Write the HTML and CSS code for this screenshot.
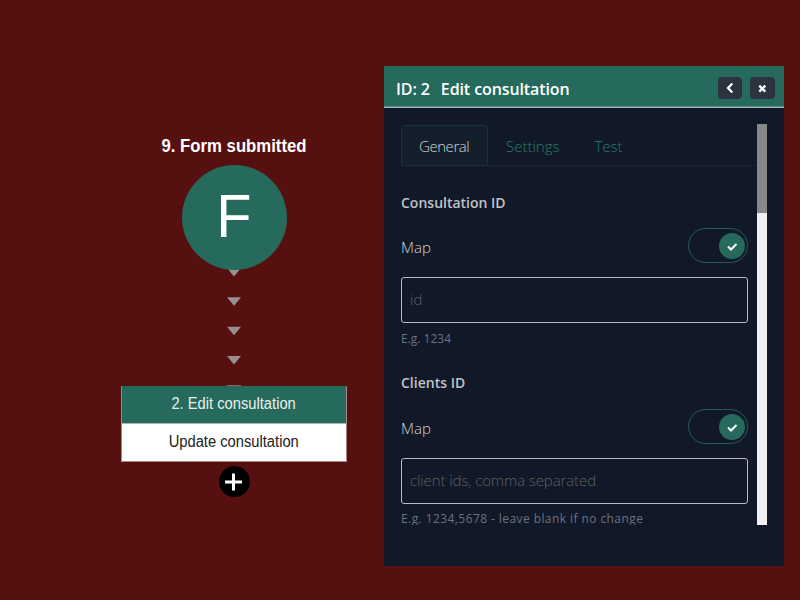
FILE: index.html
```html
<!DOCTYPE html>
<html lang="en">
<head>
<meta charset="utf-8">
<title>Edit consultation</title>
<link rel="stylesheet" href="styles.css">
</head>
<body>
<main class="canvas">
  <section class="flow">
    <h2 class="trigger-title"><span>9. Form submitted</span></h2>
    <svg class="connector" width="16" height="120" viewBox="0 0 16 120" fill="#989090">
      <path d="M1 2h14L8 10.500zM1 31.300h14L8 39.800zM1 60.700h14L8 69.200zM1 90h14L8 98.500z"/>
      <path d="M1 119.300h14v2H1z"/>
    </svg>
    <div class="trigger"><span>F</span></div>
    <div class="step">
      <div class="step-head"><span>2. Edit consultation</span></div>
      <div class="step-body"><span>Update consultation</span></div>
    </div>
    <button class="add" aria-label="Add step"><svg width="31" height="31" viewBox="0 0 31 31"><path d="M14.500 7.500v17M6 16h17" stroke="#fff" stroke-width="3"/></svg></button>
  </section>

  <aside class="panel">
    <header class="panel-head">
      <h1><span class="panel-id">ID: 2</span><span class="panel-name">Edit consultation</span></h1>
      <button class="head-btn" aria-label="Back"><svg width="24" height="22" viewBox="0 0 24 22"><path d="M14.300 6.500l-4.300 4.500 4.300 4.500" fill="none" stroke="#fff" stroke-width="2.200"/></svg></button>
      <button class="head-btn close" aria-label="Close"><svg width="25" height="22" viewBox="0 0 25 22"><path d="M9.300 8.600l6 6M15.300 8.600l-6 6" fill="none" stroke="#fff" stroke-width="2.300"/></svg></button>
    </header>
    <div class="panel-body">
      <div class="content">
        <nav class="tabs">
          <a class="tab active"><span>General</span></a>
          <a class="tab settings"><span>Settings</span></a>
          <a class="tab test"><span>Test</span></a>
        </nav>
        <div class="field">
          <h3 class="l-consult"><span>Consultation ID</span></h3>
          <div class="map-row"><span class="map">Map</span>
            <div class="toggle"><div class="knob"><svg width="26" height="26" viewBox="0 0 26 26"><path d="M9 13.500l3 3 5.500-5.500" fill="none" stroke="#fff" stroke-width="2"/></svg></div></div>
          </div>
          <div class="input"><span class="p-id">id</span></div>
          <p class="hint h-short"><span>E.g. 1234</span></p>
        </div>
        <div class="field second">
          <h3 class="l-clients"><span>Clients ID</span></h3>
          <div class="map-row"><span class="map">Map</span>
            <div class="toggle"><div class="knob"><svg width="26" height="26" viewBox="0 0 26 26"><path d="M9 13.500l3 3 5.500-5.500" fill="none" stroke="#fff" stroke-width="2"/></svg></div></div>
          </div>
          <div class="input"><span class="p-clients">client ids, comma separated</span></div>
          <p class="hint h-long"><span>E.g. 1234,5678 - leave blank if no change</span></p>
        </div>
      </div>
      <div class="scrollbar"><div class="thumb"></div></div>
    </div>
  </aside>
</main>
</body>
</html>
```
FILE: styles.css
```css
* { box-sizing: border-box; }
body { margin: 0; }
h1, h2, h3, p { margin: 0; }
button { border: 0; padding: 0; }
svg { display: block; }

.canvas {
  display: flex;
  align-items: flex-start;
  width: 800px;
  height: 600px;
  overflow: hidden;
  background: #571010;
  font-family: "Open Sans", "Noto Sans", sans-serif;
}

.flow {
  position: relative;
  display: flex;
  flex-direction: column;
  align-items: center;
  width: 226px;
  margin: 134px 37px 0 121px;
  font-family: "Liberation Sans", sans-serif;
}
.flow span { display: inline-block; transform: scaleX(0.93); }
.trigger-title {
  height: 24px;
  line-height: 24px;
  color: #fff;
  font-size: 18px;
  font-weight: 700;
  white-space: nowrap;
}
.connector { position: absolute; left: 105px; top: 132px; }
.trigger {
  position: relative;
  display: flex;
  justify-content: center;
  width: 105px;
  height: 105px;
  margin-top: 7px;
  border-radius: 50%;
  background: #256a5c;
  color: #fff;
  font-size: 62px;
  line-height: 101px;
}
.step {
  width: 226px;
  height: 76px;
  margin-top: 116px;
  border: 1px solid #a58783;
  border-top-color: #256a5c;
  background: #fff;
  font-size: 16px;
  text-align: center;
}
.step-head { height: 37px; line-height: 34px; border-bottom: 1px solid #a1b9b3; background: #256a5c; color: #e9f0ee; }
.step-body { height: 37px; line-height: 36px; color: #222; }
.flow .step span { transform: scaleX(0.92); }
.add { width: 31px; height: 31px; margin-top: 4px; border-radius: 50%; background: #000; }

.panel {
  width: 400px;
  height: 500px;
  margin-top: 66px;
  background: #111827;
}
.panel-head {
  display: flex;
  align-items: center;
  height: 42px;
  padding: 0 9px 0 12px;
  border-bottom: 1px solid #a4b5b3;
  background: #256a5c;
  box-shadow: inset 0 -1px #608e84;
}
.panel-head h1 {
  display: flex;
  flex: 1;
  gap: 11px;
  color: #fff;
  font-size: 16px;
  font-weight: 600;
  line-height: 24px;
  letter-spacing: -0.1px;
  white-space: nowrap;
  padding-top: 4px;
}
.head-btn {
  width: 24px;
  height: 22px;
  margin: 2px 8px 0 0;
  border-radius: 4px;
  background: #2c3240;
}
.head-btn.close { width: 25px; margin-right: 0; }

.panel-body { display: flex; height: 417px; padding: 16px 17px 0; }
.content {
  flex: 1;
  height: 401px;
  overflow: hidden;
  color: #d2d4d8;
  font-size: 15px;
  font-weight: 300;
  white-space: nowrap;
}
.tabs { display: flex; height: 42px; border-bottom: 1px solid #17242f; }
.tab { height: 42px; padding: 1px 0 0 18px; line-height: 43px; color: #2a7c6c; }
.tab.active {
  width: 87px;
  height: 41px;
  margin-top: 1px;
  padding: 0 0 0 17px;
  line-height: 41px;
  letter-spacing: -0.45px;
  border: 1px solid #1a3136;
  border-radius: 4px 4px 0 0;
  background: #13202b;
  color: #d2d4d8;
}
.tab.test { padding-left: 35px; }

.field { width: 347px; padding-top: 24px; }
.field h3 { height: 24px; color: #c0c2c7; font-size: 14px; font-weight: 600; line-height: 26px; }
.map-row {
  display: flex;
  align-items: center;
  justify-content: space-between;
  height: 35px;
  margin: 14px 0;
  line-height: 35px;
}
.toggle {
  display: flex;
  justify-content: flex-end;
  align-items: center;
  width: 60px;
  height: 35px;
  padding-right: 2px;
  border: 1px solid #245f57;
  border-radius: 18px;
}
.knob { width: 26px; height: 26px; border-radius: 50%; background: #256a5c; }
.map { padding-top: 3px; }
.input {
  height: 46px;
  padding-left: 8px;
  border: 1px solid #b9bbc0;
  border-radius: 3px;
  color: #606162;
  line-height: 43px;
}
.p-clients { letter-spacing: -0.1px; }
.hint { height: 24px; margin-top: 4px; color: #6b727e; font-size: 12px; font-weight: 400; line-height: 24px; }
.h-long { letter-spacing: 0.42px; }
.second { padding-top: 20px; }
.second h3 { line-height: 24px; }
.second .input { line-height: 42px; }
.second .hint { margin-top: 3px; }

.scrollbar { width: 10px; height: 401px; background: #f0f0f0; }
.thumb { height: 89px; background: #888; }
```
